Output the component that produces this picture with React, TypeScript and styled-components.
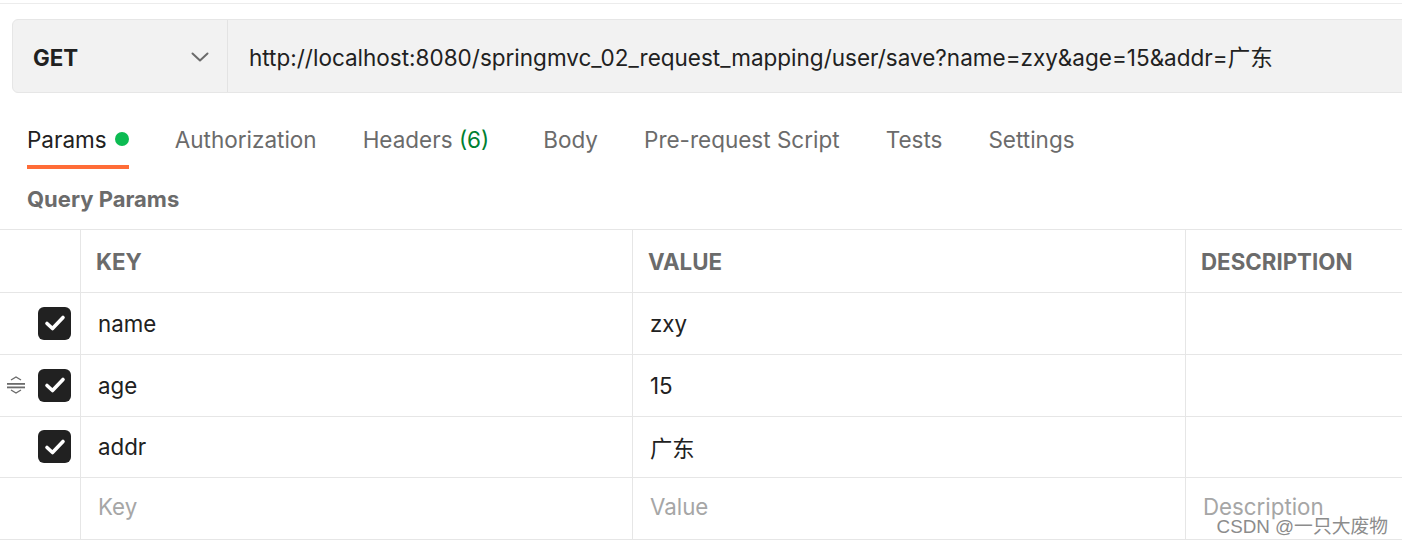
import React from "react";
import styled, { createGlobalStyle } from "styled-components";

const Global = createGlobalStyle`
  html, body { margin: 0; padding: 0; background: #ffffff; }
  body { font-family: Inter, "Noto Sans CJK SC", sans-serif; color: #212121; overflow: hidden; }
`;

const Page = styled.div`
  width: 1402px;
  height: 544px;
  position: relative;
  overflow: hidden;
  border-top: 1px solid #ececec;
  margin-top: 3px;
  box-sizing: border-box;
`;

const RequestBar = styled.div`
  display: flex;
  margin: 15px -20px 0 12px;
  height: 74px;
  background: #f2f2f2;
  border: 1px solid #e6e6e6;
  border-radius: 6px;
  box-sizing: border-box;
`;

const MethodSelect = styled.div`
  width: 215px;
  flex-shrink: 0;
  display: flex;
  align-items: center;
  justify-content: space-between;
  padding: 2px 18px 0 20px;
  box-sizing: border-box;
  border-right: 1px solid #e3e3e3;
  font-weight: 700;
  font-size: 22.3px;
  color: #212121;
`;

const UrlText = styled.div`
  display: flex;
  align-items: center;
  padding-left: 21px;
  font-size: 22.5px;
  color: #212121;
  white-space: nowrap;
`;

const Tabs = styled.div`
  display: flex;
  gap: 46px;
  padding-left: 27px;
  margin-top: 16px;
`;

const Tab = styled.div<{ $active?: boolean; $extra?: number }>`
  position: relative;
  display: flex;
  align-items: center;
  gap: 8px;
  height: 60px;
  padding-right: ${(p) => p.$extra ?? 0}px;
  font-size: 22.5px;
  color: ${(p) => (p.$active ? "#212121" : "#6b6b6b")};
  &::after {
    content: "";
    display: ${(p) => (p.$active ? "block" : "none")};
    position: absolute;
    left: 0;
    right: 0;
    bottom: 0;
    height: 4px;
    background: #ff6c37;
  }
`;

const Dot = styled.span`
  width: 14px;
  height: 14px;
  border-radius: 50%;
  background: #0cbb52;
`;

const Count = styled.span`
  color: #007f31;
`;

const SectionTitle = styled.div`
  padding-left: 27px;
  height: 60px;
  padding-bottom: 1px;
  box-sizing: border-box;
  display: flex;
  align-items: center;
  font-weight: 700;
  font-size: 22px;
  color: #6b6b6b;
`;

const Table = styled.div`
  display: grid;
  grid-template-columns: 80px 552px 553px 1fr;
  border-top: 1px solid #e6e6e6;
`;

const Cell = styled.div<{ $head?: boolean; $placeholder?: boolean; $first?: boolean }>`
  height: ${(p) => (p.$head ? 63 : 61.75)}px;
  box-sizing: border-box;
  border-bottom: 1px solid #e6e6e6;
  border-left: ${(p) => (p.$first ? "none" : "1px solid #e6e6e6")};
  display: flex;
  align-items: center;
  padding-left: ${(p) => (p.$head ? 15 : 17)}px;
  padding-bottom: ${(p) => (p.$placeholder ? 4 : 0)}px;
  font-size: 22.3px;
  font-weight: ${(p) => (p.$head ? 700 : 400)};
  color: ${(p) => (p.$head ? "#6b6b6b" : p.$placeholder ? "#a6a6a6" : "#212121")};
  white-space: nowrap;
  overflow: hidden;
`;

const CheckCell = styled.div`
  height: 61.75px;
  box-sizing: border-box;
  border-bottom: 1px solid #e6e6e6;
  display: flex;
  align-items: center;
  justify-content: flex-end;
  gap: 12px;
  padding-right: 9px;
`;

const CheckBox = styled.div`
  width: 33px;
  height: 33px;
  border-radius: 6px;
  background: #212121;
  display: flex;
  align-items: center;
  justify-content: center;
`;

const Watermark = styled.div`
  position: absolute;
  right: 14px;
  bottom: 10px;
  font-family: "Liberation Sans", "Noto Sans CJK SC", sans-serif;
  font-size: 18.8px;
  line-height: 20px;
  color: #8c8c8c;
  text-shadow: 0 0 2px #fff;
`;

const Chevron = () => (
  <svg width="18" height="10" viewBox="0 0 18 10" fill="none">
    <path d="M1.5 1.5 L9 8.5 L16.5 1.5" stroke="#6b6b6b" strokeWidth="2" strokeLinecap="round" strokeLinejoin="round" />
  </svg>
);

const Check = () => (
  <svg width="22" height="18" viewBox="0 0 22 18" fill="none">
    <path d="M3 9.5 L8.5 14.5 L19 3.5" stroke="#fff" strokeWidth="3.6" strokeLinecap="round" strokeLinejoin="round" />
  </svg>
);

const Handle = () => (
  <svg width="20" height="20" viewBox="0 0 20 20" fill="none">
    <path d="M5 5 L10 2 L15 5" stroke="#6b6b6b" strokeWidth="1.4" />
    <rect x="1" y="8" width="18" height="1.8" fill="#6b6b6b" />
    <rect x="1" y="11.5" width="18" height="1.8" fill="#6b6b6b" />
    <path d="M5 15 L10 18 L15 15" stroke="#6b6b6b" strokeWidth="1.4" />
  </svg>
);

const rows = [
  { key: "name", value: "zxy", handle: false },
  { key: "age", value: "15", handle: true },
  { key: "addr", value: "广东", handle: false },
];

export default function App() {
  return (
    <>
      <Global />
      <Page>
        <RequestBar>
          <MethodSelect>
            <span>GET</span>
            <Chevron />
          </MethodSelect>
          <UrlText>http://localhost:8080/springmvc_02_request_mapping/user/save?name=zxy&amp;age=15&amp;addr=广东</UrlText>
        </RequestBar>
        <Tabs>
          <Tab $active>
            Params <Dot />
          </Tab>
          <Tab>Authorization</Tab>
          <Tab $extra={8}>
            <span>
              Headers <Count>(6)</Count>
            </span>
          </Tab>
          <Tab>Body</Tab>
          <Tab>Pre-request Script</Tab>
          <Tab>Tests</Tab>
          <Tab>Settings</Tab>
        </Tabs>
        <SectionTitle>Query Params</SectionTitle>
        <Table>
          <Cell $head $first />
          <Cell $head>KEY</Cell>
          <Cell $head>VALUE</Cell>
          <Cell $head>DESCRIPTION</Cell>
          {rows.map((r) => (
            <React.Fragment key={r.key}>
              <CheckCell>
                {r.handle && <Handle />}
                <CheckBox>
                  <Check />
                </CheckBox>
              </CheckCell>
              <Cell>{r.key}</Cell>
              <Cell>{r.value}</Cell>
              <Cell />
            </React.Fragment>
          ))}
          <CheckCell />
          <Cell $placeholder>Key</Cell>
          <Cell $placeholder>Value</Cell>
          <Cell $placeholder>Description</Cell>
        </Table>
        <Watermark>CSDN @一只大废物</Watermark>
      </Page>
    </>
  );
}
